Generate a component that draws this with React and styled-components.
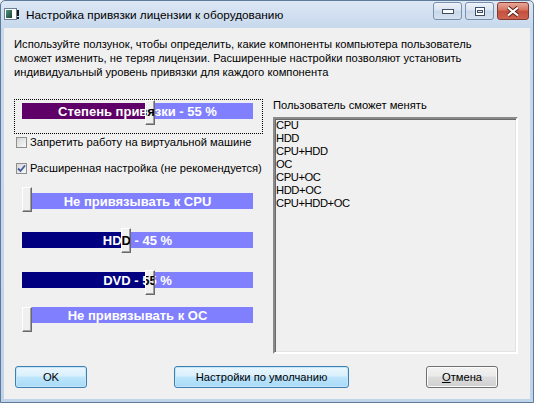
import styled, { createGlobalStyle } from "styled-components";

const BAR_W = 231;
const THUMB_W = 10;

const GlobalStyle = createGlobalStyle`
  body {
    margin: 0;
    background: #f0f0f0;
    font-family: "Liberation Sans", Arial, sans-serif;
    font-size: 11.2px;
    color: #000;
  }
`;

const Window = styled.div`
  width: 534px;
  height: 403px;
  box-sizing: border-box;
  display: flex;
  flex-direction: column;
  border: 1px solid #5f7a99;
  border-radius: 5px 5px 0 0;
  padding: 0 3px 3px;
  background: linear-gradient(#dce7f4, #c8d9ed 26px, #bfd3ea);
`;

const TitleBar = styled.div`
  height: 27px;
  display: flex;
  align-items: flex-start;
  flex-shrink: 0;
`;

const TitleIcon = styled.div`
  width: 16px;
  height: 16px;
  margin: 6px 6px 0 0;
`;

const TitleText = styled.div`
  flex: 1;
  font-size: 11.8px;
  line-height: 16px;
  margin-top: 6px;
`;

const CaptionButtons = styled.div`
  display: flex;
  gap: 3px;
  margin: 1px 1px 0 0;
`;

const CaptionButton = styled.div`
  width: ${(p) => p.$w}px;
  height: 18px;
  box-sizing: border-box;
  border-radius: 3px;
  border: 1px solid ${(p) => (p.$close ? "#833a30" : "#7990ae")};
  background: ${(p) =>
    p.$close
      ? "linear-gradient(#e6a899, #d6725f 45%, #c44f3c 50%, #cd6350)"
      : "linear-gradient(#eef3fa, #dae4f1 45%, #c8d7ea 50%, #d5e1ef)"};
  display: flex;
  align-items: center;
  justify-content: center;
`;

const Client = styled.div`
  flex: 1;
  background: #f0f0f0;
  display: flex;
  flex-direction: column;
  padding: 9px 12px 0 10px;
`;

const Intro = styled.p`
  margin: 0;
  line-height: 14px;
`;

const Content = styled.div`
  display: flex;
  gap: 10px;
  margin-top: 19px;
  align-items: flex-start;
`;

const LeftColumn = styled.div`
  width: 249px;
  padding-top: 1px;
  display: flex;
  flex-direction: column;
`;

const FocusBox = styled.div`
  height: 35px;
  box-sizing: border-box;
  border: 1px dotted #000;
  padding: 3px 0 0 7px;
`;

const CheckRow = styled.label`
  display: flex;
  align-items: center;
  gap: 3px;
  height: 14px;
  line-height: 14px;
  margin-top: ${(p) => p.$mt}px;
  padding-left: 2px;
`;

const Box = styled.span`
  width: 11px;
  height: 11px;
  box-sizing: border-box;
  border: 1px solid #8e8f8f;
  background: linear-gradient(135deg, #d6d6d6, #f9f9f9);
  display: flex;
  align-items: center;
  justify-content: center;
`;

const Sliders = styled.div`
  padding-left: 8px;
  display: flex;
  flex-direction: column;
`;

const Track = styled.div`
  position: relative;
  width: ${BAR_W}px;
  height: 16px;
  margin-top: ${(p) => p.$mt || 0}px;
  background: #8080ff;
  display: flex;
  align-items: center;
  justify-content: center;
  color: #fff;
  font-weight: bold;
  font-size: 13px;
`;

const Fill = styled.div`
  position: absolute;
  left: 0;
  top: 0;
  bottom: 0;
  background: ${(p) => p.$color};
`;

const TrackText = styled.span`
  position: relative;
  white-space: nowrap;
`;

const Thumb = styled.div`
  position: absolute;
  width: ${THUMB_W}px;
  height: 25px;
  box-sizing: border-box;
  border: 1px solid;
  border-color: #ffffff #696969 #696969 #ffffff;
  box-shadow: inset -1px -1px #a0a0a0;
  background: #f0f0f0;
  overflow: hidden;
  z-index: 2;
`;

const ThumbText = styled.div`
  position: absolute;
  width: ${BAR_W}px;
  height: 16px;
  display: flex;
  align-items: center;
  justify-content: center;
  color: #000;
  white-space: nowrap;
`;

const RightColumn = styled.div`
  flex: 1;
  display: flex;
  flex-direction: column;
`;

const ListLabel = styled.div`
  line-height: 14px;
`;

const ListBox = styled.div`
  margin-top: 5px;
  height: 237px;
  box-sizing: border-box;
  border: 2px solid;
  border-color: #8a8a8a #ffffff #ffffff #8a8a8a;
  box-shadow: inset 1px 1px #696969, inset -1px -1px #e3e3e3;
  background: #f0f0f0;
  padding-left: 1px;
`;

const ListItem = styled.div`
  line-height: 13px;
  letter-spacing: -0.4px;
`;

const ButtonRow = styled.div`
  display: flex;
  margin-top: 12px;
  padding-left: 1px;
`;

const Button = styled.button`
  width: ${(p) => p.$w}px;
  height: 22px;
  margin-left: ${(p) => (p.$ml === "auto" ? "auto" : `${p.$ml || 0}px`)};
  margin-right: ${(p) => p.$mr || 0}px;
  border-radius: 3px;
  font-family: "Liberation Sans", Arial, sans-serif;
  font-size: 11.2px;
  color: #000;
  padding: 0;
  border: 1px solid ${(p) => (p.$blue ? "#3c7fb1" : "#707070")};
  background: ${(p) =>
    p.$blue
      ? "linear-gradient(#eaf6fd, #d9f0fc 45%, #bee6fd 50%, #a7d9f5)"
      : "linear-gradient(#f2f2f2, #ebebeb 45%, #dddddd 50%, #cfcfcf)"};
  box-shadow: inset 0 0 0 1px ${(p) => (p.$blue ? "#c5e6f8" : "#fcfcfc")};
`;

const Slider = ({ label, value, fill, thumbTop = -4, mt }) => {
  const pos = Math.round(value * (BAR_W - THUMB_W));
  return (
    <Track $mt={mt}>
      <Fill $color={fill} style={{ width: pos }} />
      <TrackText>{label}</TrackText>
      <Thumb style={{ left: pos, top: thumbTop }}>
        <ThumbText aria-hidden="true" style={{ left: -pos - 1, top: -thumbTop - 1 }}>
          {label}
        </ThumbText>
      </Thumb>
    </Track>
  );
};

const Check = ({ checked, children, mt }) => (
  <CheckRow $mt={mt}>
    <Box>
      {checked && (
        <svg width="9" height="9" viewBox="0 0 9 9">
          <path d="M1 4.5 L3.5 7 L8 1.5" fill="none" stroke="#3f5d98" strokeWidth="1.8" />
        </svg>
      )}
    </Box>
    {children}
  </CheckRow>
);

const AppIcon = () => (
  <svg width="16" height="16" viewBox="0 0 16 16">
    <rect x="0.5" y="1.5" width="12" height="11" fill="#fff" stroke="#6a7e96" />
    <defs>
      <linearGradient id="ig" x1="0" y1="0" x2="1" y2="1">
        <stop offset="0" stopColor="#4f9a7c" />
        <stop offset="1" stopColor="#1d3f3a" />
      </linearGradient>
    </defs>
    <rect x="2" y="3" width="6" height="8" fill="url(#ig)" />
    <rect x="13" y="3" width="2" height="6" fill="#1a1a1a" />
    <rect x="13" y="10" width="2" height="2" fill="#1a1a1a" />
  </svg>
);

const items = ["CPU", "HDD", "CPU+HDD", "OC", "CPU+OC", "HDD+OC", "CPU+HDD+OC"];

const App = () => (
  <>
    <GlobalStyle />
    <Window>
      <TitleBar>
        <TitleIcon>
          <AppIcon />
        </TitleIcon>
        <TitleText>Настройка привязки лицензии к оборудованию</TitleText>
        <CaptionButtons>
          <CaptionButton $w={29}>
            <svg width="12" height="6" viewBox="0 0 12 6">
              <rect x="0.5" y="1.5" width="11" height="4" fill="#fff" stroke="#3d4e66" />
            </svg>
          </CaptionButton>
          <CaptionButton $w={29}>
            <svg width="10" height="9" viewBox="0 0 10 9">
              <rect x="0.5" y="0.5" width="9" height="8" fill="#fff" stroke="#3d4e66" />
              <rect x="2.5" y="3.5" width="5" height="2" fill="#dfe7f1" stroke="#3d4e66" />
            </svg>
          </CaptionButton>
          <CaptionButton $w={32} $close>
            <svg width="14" height="11" viewBox="0 0 14 11">
              <path d="M2 1.5 L12 9.5 M12 1.5 L2 9.5" stroke="#5a2018" strokeWidth="4" />
              <path d="M2 1.5 L12 9.5 M12 1.5 L2 9.5" stroke="#fff" strokeWidth="2.2" />
            </svg>
          </CaptionButton>
        </CaptionButtons>
      </TitleBar>
      <Client>
        <Intro>
          Используйте ползунок, чтобы определить, какие компоненты компьютера пользователь
          <br />
          сможет изменить, не теряя лицензии. Расширенные настройки позволяют установить
          <br />
          индивидуальный уровень привязки для каждого компонента
        </Intro>
        <Content>
          <LeftColumn>
            <FocusBox>
              <Slider label="Степень привязки - 55 %" value={0.555} fill="#5e0068" thumbTop={-3} />
            </FocusBox>
            <Check mt={1}>Запретить работу на виртуальной машине</Check>
            <Check checked mt={12}>
              Расширенная настройка (не рекомендуется)
            </Check>
            <Sliders>
              <Slider label="Не привязывать к CPU" value={0} fill="#000080" thumbTop={-6} mt={18} />
              <Slider label="HDD - 45 %" value={0.45} fill="#000080" thumbTop={-4} mt={23} />
              <Slider label="DVD - 55 %" value={0.555} fill="#000080" thumbTop={-2} mt={24} />
              <Slider label="Не привязывать к OC" value={0} fill="#000080" thumbTop={0} mt={19} />
            </Sliders>
          </LeftColumn>
          <RightColumn>
            <ListLabel>Пользователь сможет менять</ListLabel>
            <ListBox>
              {items.map((it) => (
                <ListItem key={it}>{it}</ListItem>
              ))}
            </ListBox>
          </RightColumn>
        </Content>
        <ButtonRow>
          <Button $w={72} $blue>
            OK
          </Button>
          <Button $w={175} $ml={87} $blue>
            Настройки по умолчанию
          </Button>
          <Button $w={72} $ml="auto" $mr={20}>
            <u>О</u>тмена
          </Button>
        </ButtonRow>
      </Client>
    </Window>
  </>
);

export default App;
